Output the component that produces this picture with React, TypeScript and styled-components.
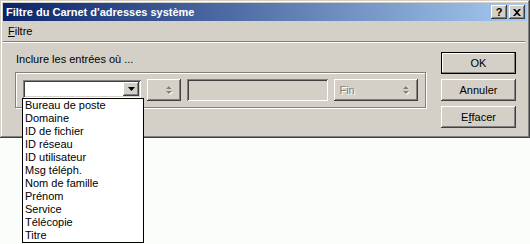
import styled, { createGlobalStyle } from "styled-components";

const fields = [
    "Bureau de poste",
    "Domaine",
    "ID de fichier",
    "ID réseau",
    "ID utilisateur",
    "Msg téléph.",
    "Nom de famille",
    "Prénom",
    "Service",
    "Télécopie",
    "Titre",
];

const raised = `
    box-shadow: inset -1px -1px #404040, inset 1px 1px #ffffff,
        inset -2px -2px #808080, inset 2px 2px #d4d0c8;
`;

const sunken = `
    box-shadow: inset 1px 1px #808080, inset -1px -1px #ffffff,
        inset 2px 2px #404040, inset -2px -2px #d4d0c8;
`;

function SpinArrows() {
    return (
        <svg width="8" height="10" viewBox="0 0 8 10">
            <polygon points="1,4 4,1 7,4" fill="#ffffff" />
            <polygon points="1,7 7,7 4,10" fill="#ffffff" />
            <polygon points="0,4 3,1 6,4" fill="#808080" />
            <polygon points="0,6 6,6 3,9" fill="#808080" />
        </svg>
    );
}

export default function App() {
    return (
        <Page>
            <GlobalStyle />
            <Window>
                <TitleBar>
                    <span>Filtre du Carnet d'adresses système</span>
                    <CaptionButtons>
                        <CaptionButton>?</CaptionButton>
                        <CaptionButton>
                            <svg width="8" height="7" viewBox="0 0 8 7">
                                <path d="M0 0 L2 0 L4 2 L6 0 L8 0 L5 3.5 L8 7 L6 7 L4 5 L2 7 L0 7 L3 3.5 Z" fill="#000" />
                            </svg>
                        </CaptionButton>
                    </CaptionButtons>
                </TitleBar>
                <MenuBar>
                    <MenuItem><u>F</u>iltre</MenuItem>
                </MenuBar>
                <Separator />
                <Body>
                    <LeftPanel>
                        <Label>Inclure les entrées où ...</Label>
                        <Group>
                            <Combo>
                                <DropButton>
                                    <svg width="7" height="4" viewBox="0 0 7 4">
                                        <polygon points="0,0 7,0 3.5,4" fill="#000" />
                                    </svg>
                                </DropButton>
                                <DropList>
                                    {fields.map((f) => (
                                        <ListItem key={f}>{f}</ListItem>
                                    ))}
                                </DropList>
                            </Combo>
                            <SpinBox $width={34}>
                                <span />
                                <SpinArrows />
                            </SpinBox>
                            <TextField $width={142} />
                            <SpinBox $width={84}>
                                <span>Fin</span>
                                <SpinArrows />
                            </SpinBox>
                        </Group>
                    </LeftPanel>
                    <ButtonColumn>
                        <DialogButton $default>OK</DialogButton>
                        <DialogButton>Annuler</DialogButton>
                        <DialogButton>E<u>f</u>facer</DialogButton>
                    </ButtonColumn>
                </Body>
            </Window>
        </Page>
    );
}

const GlobalStyle = createGlobalStyle`
    html, body {
        margin: 0;
        padding: 0;
        background: #fbfdfb;
    }
    body {
        font-family: "Liberation Sans", Arial, sans-serif;
        font-size: 11px;
        color: #000;
    }
`;

const Page = styled.div`
    width: 530px;
    height: 244px;
    background: #fbfdfb;
`;

const Window = styled.div`
    position: relative;
    z-index: 1;
    width: 530px;
    height: 138px;
    box-sizing: border-box;
    padding: 3px;
    background: #d4d0c8;
    display: flex;
    flex-direction: column;
    box-shadow: inset -1px -1px #404040, inset 1px 1px #d4d0c8,
        inset -2px -2px #808080, inset 2px 2px #ffffff;
`;

const TitleBar = styled.div`
    height: 18px;
    display: flex;
    align-items: center;
    padding: 0 2px 0 3px;
    background: linear-gradient(to right, #0a246a, #a6caf0);
    color: #ffffff;
    font-weight: bold;
    font-size: 11px;
`;

const CaptionButtons = styled.div`
    margin-left: auto;
    display: flex;
    gap: 2px;
`;

const CaptionButton = styled.div`
    width: 16px;
    height: 14px;
    box-sizing: border-box;
    background: #d4d0c8;
    color: #000;
    font-size: 11px;
    font-weight: bold;
    display: flex;
    align-items: center;
    justify-content: center;
    ${raised}
`;

const MenuBar = styled.div`
    height: 20px;
    display: flex;
    align-items: center;
    padding-left: 5px;
`;

const MenuItem = styled.span`
    line-height: 13px;
`;

const Separator = styled.div`
    height: 2px;
    box-sizing: border-box;
    border-top: 1px solid #808080;
    border-bottom: 1px solid #ffffff;
    margin-right: 2px;
`;

const Body = styled.div`
    flex: 1;
    display: flex;
    padding: 9px 11px 0 12px;
`;

const LeftPanel = styled.div`
    width: 411px;
    display: flex;
    flex-direction: column;
`;

const Label = styled.div`
    line-height: 13px;
    margin-top: 1px;
    padding-left: 1px;
`;

const Group = styled.div`
    margin-top: 6px;
    height: 36px;
    box-sizing: border-box;
    border: 1px solid #808080;
    box-shadow: inset 1px 1px #ffffff, 1px 1px #ffffff;
    padding: 6px 7px;
    display: flex;
    align-items: flex-start;
    gap: 6px;
`;

const Combo = styled.div`
    position: relative;
    width: 119px;
    height: 18px;
    margin-top: 1px;
    box-sizing: border-box;
    padding: 2px;
    background: #ffffff;
    display: flex;
    justify-content: flex-end;
    ${sunken}
`;

const DropButton = styled.div`
    width: 16px;
    height: 14px;
    box-sizing: border-box;
    background: #d4d0c8;
    display: flex;
    align-items: center;
    justify-content: center;
    ${raised}
`;

const DropList = styled.div`
    position: absolute;
    top: 100%;
    left: -1px;
    width: 122px;
    box-sizing: border-box;
    border: 1px solid #000;
    background: #ffffff;
    z-index: 10;
`;

const ListItem = styled.div`
    height: 13px;
    line-height: 13px;
    padding-left: 2px;
    white-space: nowrap;
`;

const SpinBox = styled.div<{ $width: number }>`
    width: ${(p) => p.$width}px;
    height: 22px;
    box-sizing: border-box;
    padding: 0 7px 0 5px;
    background: #d4d0c8;
    color: #808080;
    text-shadow: 1px 1px #ffffff;
    display: flex;
    align-items: center;
    justify-content: space-between;
    ${raised}
`;

const TextField = styled.div<{ $width: number }>`
    width: ${(p) => p.$width}px;
    height: 22px;
    box-sizing: border-box;
    background: #d4d0c8;
    ${sunken}
`;

const ButtonColumn = styled.div`
    margin-left: auto;
    display: flex;
    flex-direction: column;
    gap: 5px;
`;

const DialogButton = styled.div<{ $default?: boolean }>`
    width: 75px;
    height: 22px;
    box-sizing: border-box;
    background: #d4d0c8;
    font-size: 11px;
    display: flex;
    align-items: center;
    justify-content: center;
    border: ${(p) => (p.$default ? "1px solid #000" : "none")};
    box-shadow: ${(p) =>
        p.$default
            ? "inset -1px -1px #808080, inset 1px 1px #ffffff"
            : "inset -1px -1px #404040, inset 1px 1px #ffffff, inset -2px -2px #808080, inset 2px 2px #d4d0c8"};
`;
